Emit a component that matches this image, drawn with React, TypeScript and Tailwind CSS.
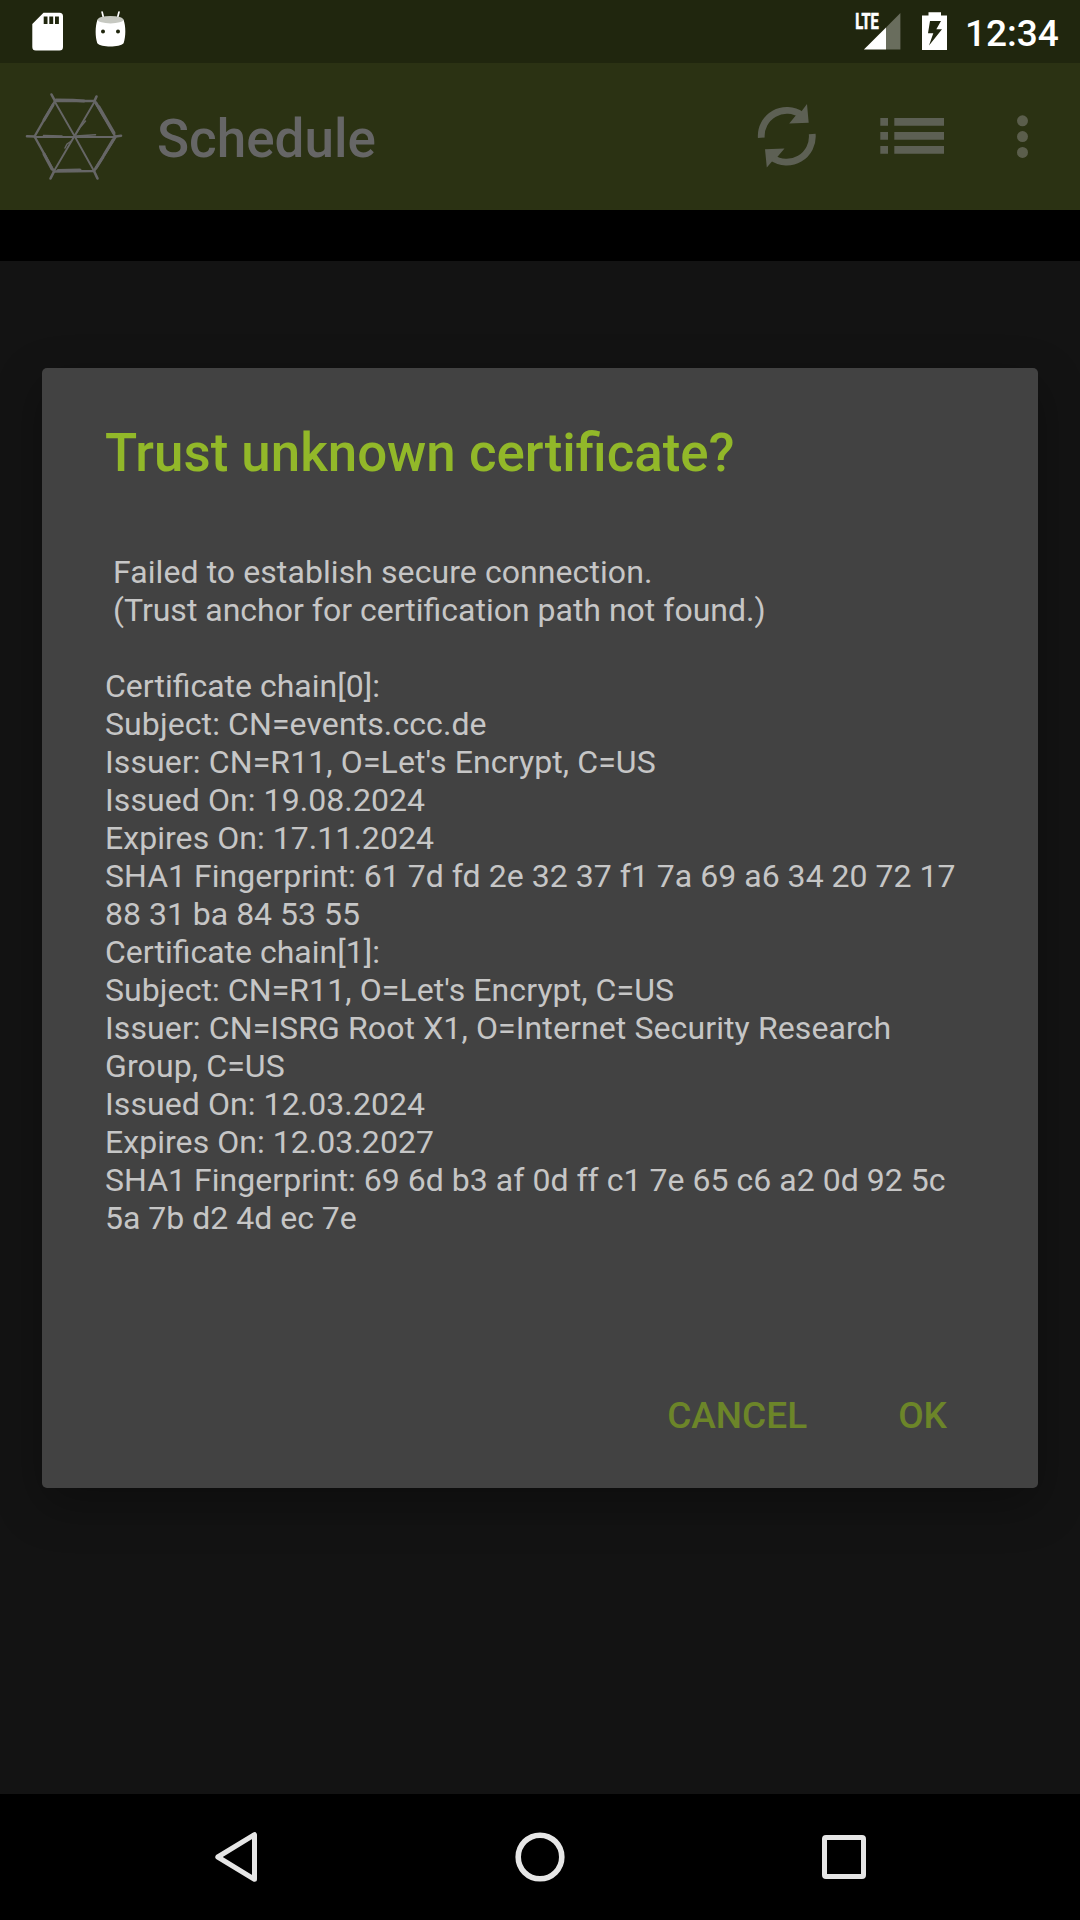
import type { ReactNode } from "react";

type Line = { text: string; tracking: string };

const notice: Line[] = [
  { text: "Failed to establish secure connection.", tracking: "tracking-[0.080px]" },
  { text: "(Trust anchor for certification path not found.)", tracking: "tracking-normal" },
];

const details: Line[] = [
  { text: "Certificate chain[0]:", tracking: "tracking-normal" },
  { text: "Subject: CN=events.ccc.de", tracking: "tracking-[0.100px]" },
  { text: "Issuer: CN=R11, O=Let's Encrypt, C=US", tracking: "tracking-[0.110px]" },
  { text: "Issued On: 19.08.2024", tracking: "tracking-[0.080px]" },
  { text: "Expires On: 17.11.2024", tracking: "tracking-[0.050px]" },
  { text: "SHA1 Fingerprint: 61 7d fd 2e 32 37 f1 7a 69 a6 34 20 72 17", tracking: "tracking-[0.030px]" },
  { text: "88 31 ba 84 53 55", tracking: "tracking-normal" },
  { text: "Certificate chain[1]:", tracking: "tracking-normal" },
  { text: "Subject: CN=R11, O=Let's Encrypt, C=US", tracking: "tracking-[0.080px]" },
  { text: "Issuer: CN=ISRG Root X1, O=Internet Security Research", tracking: "tracking-[0.110px]" },
  { text: "Group, C=US", tracking: "tracking-[0.110px]" },
  { text: "Issued On: 12.03.2024", tracking: "tracking-[0.080px]" },
  { text: "Expires On: 12.03.2027", tracking: "tracking-[0.050px]" },
  { text: "SHA1 Fingerprint: 69 6d b3 af 0d ff c1 7e 65 c6 a2 0d 92 5c", tracking: "tracking-[0.030px]" },
  { text: "5a 7b d2 4d ec 7e", tracking: "tracking-normal" },
];

function StatusBar() {
  return (
    <header className="flex h-[63px] shrink-0 items-start bg-[#20260e] text-white">
      <svg className="ml-[32px] mt-[12px] h-[39px] w-[31px]" viewBox="0 0 31 39">
        <path
          fillRule="evenodd"
          fill="white"
          d="M11.500 .7H27.500Q31 .7 31 4.200V35Q31 38.500 27.500 38.500H3.800Q.3 38.500 .3 35V12ZM11.700 4.500V12H15.500V4.500ZM17.300 4.500V12H21.200V4.500ZM23 4.500V12H26.900V4.500Z"
        />
      </svg>
      <svg className="ml-[32px] mt-[10px] h-[38px] w-[31px]" viewBox="0 0 31 38">
        <path d="M7.100 2 8.800 9M24 2 22.200 9" stroke="white" strokeWidth="1.700" strokeLinecap="round" />
        <path
          fillRule="evenodd"
          fill="white"
          d="M2.500 9.500C.2 16 -.1 26 2.300 33.200C6 37.600 24.500 37.600 28.600 33.200C31 26 30.800 16 28.500 9.500ZM6 21.500a2 2 0 1 1 4 0a2 2 0 1 1 -4 0M21 21.500a2 2 0 1 1 4 0a2 2 0 1 1 -4 0"
        />
        <ellipse cx="15.500" cy="9.700" rx="12.800" ry="3.700" fill="#c6c8c1" />
      </svg>
      <svg className="ml-auto mr-[21px] mt-[8px] h-[42px] w-[46px] overflow-visible" viewBox="0 -4 46 42">
        <path d="M45.400 1V37.500H31V15.400Z" fill="#696d5d" />
        <path d="M31 15.400V37.500H8.900Z" fill="white" />
        <text
          x="0.300"
          y="17"
          fill="white"
          stroke="white"
          strokeWidth="0.700"
          fontFamily="Roboto, sans-serif"
          fontSize="21.500"
          fontWeight="700"
          textLength="23.500"
          lengthAdjust="spacingAndGlyphs"
        >
          LTE
        </text>
      </svg>
      <svg className="mr-[18px] mt-[12px] h-[38px] w-[25px]" viewBox="0 0 25 38">
        <path
          fillRule="evenodd"
          fill="white"
          d="M6.500 .2H19V3.500H25V38H0V3.500H6.500ZM8 9L6 21.200H11.300L7 33.500L20 17.300H14.300L19 9Z"
        />
      </svg>
      <div className="mr-[23px] mt-[12px] w-[92px] whitespace-nowrap text-right text-[37px] font-medium leading-[44px]">
        12:34
      </div>
    </header>
  );
}

function Toolbar() {
  return (
    <div className="flex h-[147px] shrink-0 items-start bg-[#2b3213]">
      <svg
        className="ml-[25px] mt-[28px] h-[92px] w-[98px]"
        viewBox="25 91 98 92"
        fill="none"
        stroke="#666666"
        strokeLinejoin="round"
        strokeLinecap="round"
      >
        <path d="M55 102 74.500 136 94 171M95 101 74.500 136 54 171M35 137 115 137" strokeWidth="1.900" />
        <path d="M55 101 94.500 101 115.500 137 94 171 54 171.500 34.500 136.500Z" strokeWidth="2.400" />
        <path d="M56 100 73 100.300 84 101M96 103 105 118M99 107 114 133M113 140 104 155M103 157 96 168M58 170.500 80 170M52 169 44 154M53 105 44 120" strokeWidth="3.100" />
        <path d="M55 101 51.500 94.500M94.500 101 96.500 96.500M54 171.500 50.500 178.500M94 171 97.500 178.500M34.500 136.500 27 136.300M115.500 136.500 121 135.700" strokeWidth="2.600" />
        <path d="M76 134 80 127.500 85.500 121M71.500 141 67 144 65 148M43.500 135.500 62 136M76 136 95.500 134.800" strokeWidth="1.500" />
      </svg>
      <h1 className="ml-[34px] mt-[45px] text-[53px] font-medium leading-[62px] text-[#666666]">Schedule</h1>
      <svg className="ml-auto mt-[40px] h-[67px] w-[60px]" viewBox="757 103 60 67" fill="#5d6054">
        <path
          d="M761.300 137.800A25.600 25.600 0 0 1 801.500 115M812.200 134A25.600 25.600 0 0 1 772 157.500"
          fill="none"
          stroke="#5d6054"
          strokeWidth="6.800"
        />
        <path d="M807 104 808.700 122.700 789.200 123.500 796 115.200 801 112ZM765 149.200 784.500 148.400 777.500 156.700 773 160.200 766.800 167.500Z" />
      </svg>
      <svg className="ml-[63px] mt-[54px] h-[38px] w-[64px]" viewBox="0 0 64 38" fill="#5d6054">
        <path d="M.3 1H8V8.700H.3ZM14.300 1H64V8.700H14.300ZM.3 15H8V22.700H.3ZM14.300 15H64V22.700H14.300ZM.3 29H8V36.700H.3ZM14.300 29H64V36.700H14.300Z" />
      </svg>
      <svg className="ml-[73px] mr-[52px] mt-[52px] h-[44px] w-[11px]" viewBox="0 0 11 44" fill="#5b5e4c">
        <circle cx="5.500" cy="5.800" r="5.500" />
        <circle cx="5.500" cy="21.600" r="5.500" />
        <circle cx="5.500" cy="37.400" r="5.500" />
      </svg>
    </div>
  );
}

function DialogButton({ children }: { children: ReactNode }) {
  return (
    <button className="text-[37px] font-medium leading-[44px] text-[#6c8529]">{children}</button>
  );
}

function CertificateDialog() {
  return (
    <section className="mx-[42px] mt-[107px] flex h-[1120px] flex-col rounded-[5px] bg-[#424242] px-[63px] shadow-[0_16px_48px_rgba(0,0,0,0.300)]">
      <h2 className="mt-[54px] whitespace-nowrap text-[52.850px] font-medium leading-[62px] text-[#92b829]">
        Trust unknown certificate?
      </h2>
      <div className="mt-[69px] whitespace-nowrap text-[32px] leading-[38px] text-[#c6c6c6]">
        <div className="mb-[38px] pl-[8px]">
          {notice.map((line) => (
            <p key={line.text} className={line.tracking}>
              {line.text}
            </p>
          ))}
        </div>
        {details.map((line, index) => (
          <p key={index} className={line.tracking}>
            {line.text}
          </p>
        ))}
      </div>
      <div className="mb-[50px] mr-[28px] mt-auto flex justify-end gap-[91px]">
        <DialogButton>CANCEL</DialogButton>
        <DialogButton>OK</DialogButton>
      </div>
    </section>
  );
}

function NavigationBar() {
  return (
    <nav className="flex h-[126px] shrink-0 items-center justify-between bg-black px-[213px]">
      <svg className="h-[52px] w-[46px]" viewBox="0 0 46 52" fill="none" stroke="#e6e6e6" strokeWidth="5" strokeLinejoin="round">
        <path d="M41.500 3.700V48.300L4.800 26Z" />
      </svg>
      <svg className="h-[52px] w-[52px]" viewBox="0 0 52 52" fill="none" stroke="#e6e6e6" strokeWidth="5.600">
        <circle cx="26" cy="26" r="21.800" />
      </svg>
      <svg className="h-[46px] w-[46px]" viewBox="0 0 46 46" fill="none" stroke="#e6e6e6" strokeWidth="5">
        <rect x="3.500" y="3.500" width="39" height="39" rx="1.500" />
      </svg>
    </nav>
  );
}

export default function App() {
  return (
    <div className="flex h-[1920px] w-[1080px] flex-col overflow-hidden bg-[#131313] font-['Roboto',sans-serif]">
      <StatusBar />
      <Toolbar />
      <div className="h-[51px] shrink-0 bg-black" />
      <main className="min-h-0 grow">
        <div className="flow-root">
          <CertificateDialog />
        </div>
      </main>
      <NavigationBar />
    </div>
  );
}
